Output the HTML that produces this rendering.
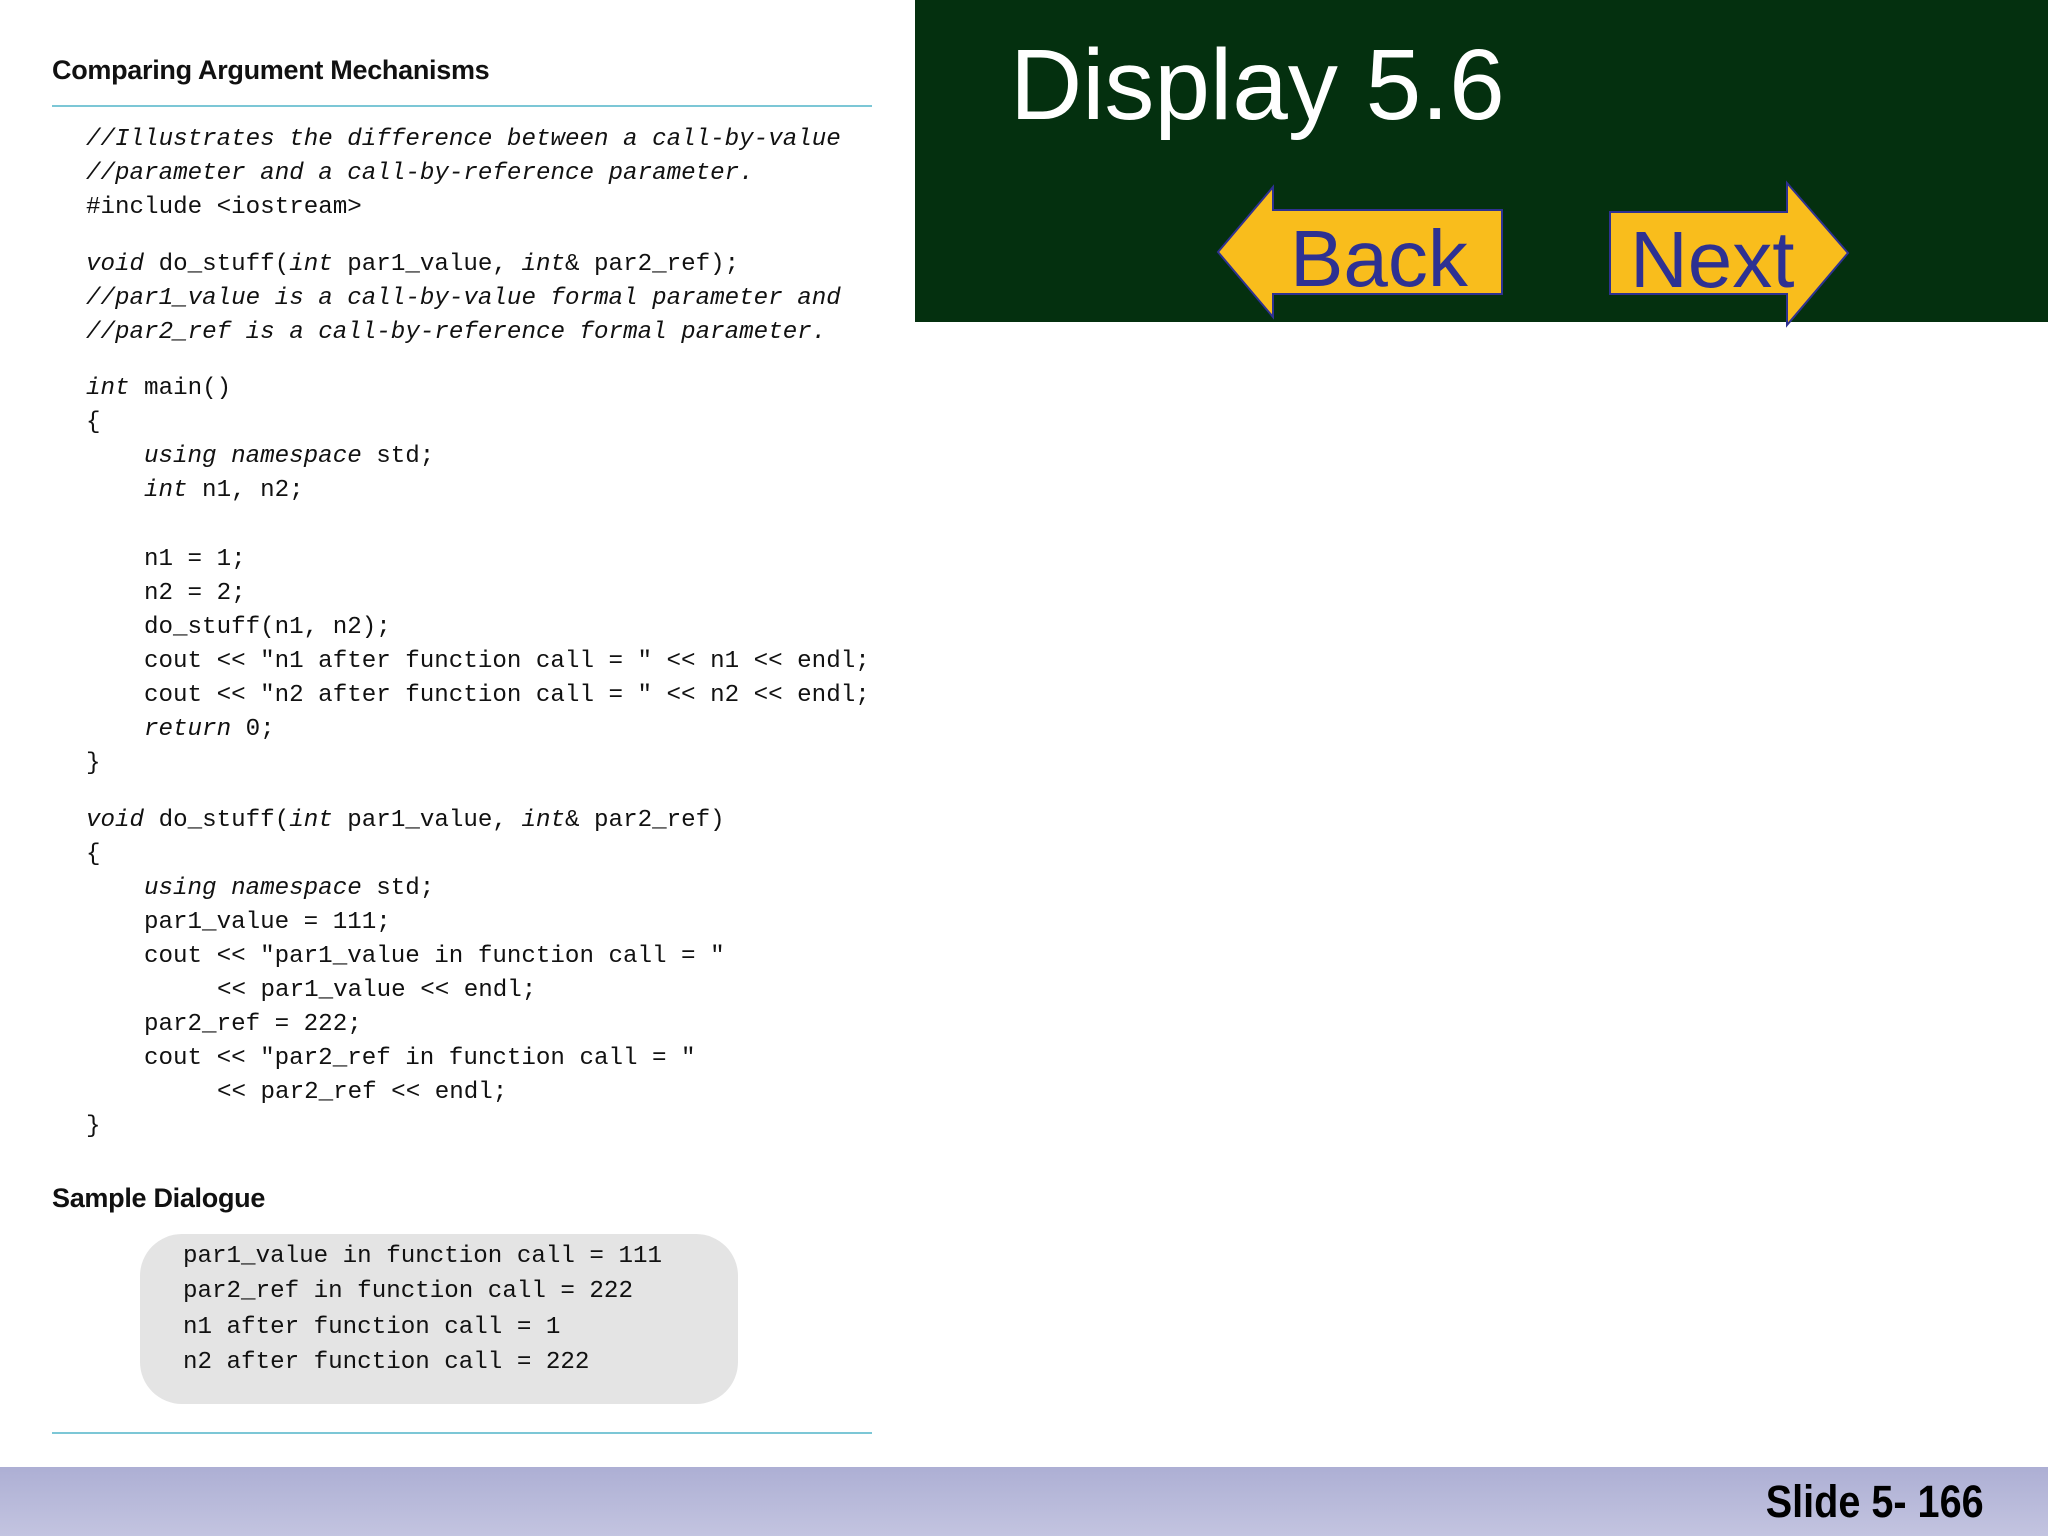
<!DOCTYPE html>
<html><head><meta charset="utf-8"><style>
body{margin:0;width:2048px;height:1536px;position:relative;background:#fff;overflow:hidden;font-family:"Liberation Sans",sans-serif}
.a{position:absolute;white-space:pre}
.c{font-family:"Liberation Mono",monospace;font-size:24.2px;line-height:34px;color:#111;position:absolute;white-space:pre}
i{font-style:italic}
.h{font-weight:bold;font-size:27px;color:#111;letter-spacing:-0.3px}
</style></head><body>
<div class="a h" style="left:52px;top:55px">Comparing Argument Mechanisms</div>
<div style="position:absolute;left:52px;top:105px;width:820px;height:2px;background:#7cc7d6"></div>

<div class="c" style="left:86px;top:123px"><i>//Illustrates the difference between a call-by-value</i></div>
<div class="c" style="left:86px;top:157px"><i>//parameter and a call-by-reference parameter.</i></div>
<div class="c" style="left:86px;top:191px">#include &lt;iostream&gt;</div>
<div class="c" style="left:86px;top:248px"><i>void</i> do_stuff(<i>int</i> par1_value, <i>int</i>&amp; par2_ref);</div>
<div class="c" style="left:86px;top:282px"><i>//par1_value is a call-by-value formal parameter and</i></div>
<div class="c" style="left:86px;top:316px"><i>//par2_ref is a call-by-reference formal parameter.</i></div>
<div class="c" style="left:86px;top:372px"><i>int</i> main()</div>
<div class="c" style="left:86px;top:406px">{</div>
<div class="c" style="left:144px;top:440px"><i>using namespace</i> std;</div>
<div class="c" style="left:144px;top:474px"><i>int</i> n1, n2;</div>
<div class="c" style="left:144px;top:543px">n1 = 1;</div>
<div class="c" style="left:144px;top:577px">n2 = 2;</div>
<div class="c" style="left:144px;top:611px">do_stuff(n1, n2);</div>
<div class="c" style="left:144px;top:645px">cout &lt;&lt; "n1 after function call = " &lt;&lt; n1 &lt;&lt; endl;</div>
<div class="c" style="left:144px;top:679px">cout &lt;&lt; "n2 after function call = " &lt;&lt; n2 &lt;&lt; endl;</div>
<div class="c" style="left:144px;top:713px"><i>return</i> 0;</div>
<div class="c" style="left:86px;top:747px">}</div>
<div class="c" style="left:86px;top:804px"><i>void</i> do_stuff(<i>int</i> par1_value, <i>int</i>&amp; par2_ref)</div>
<div class="c" style="left:86px;top:838px">{</div>
<div class="c" style="left:144px;top:872px"><i>using namespace</i> std;</div>
<div class="c" style="left:144px;top:906px">par1_value = 111;</div>
<div class="c" style="left:144px;top:940px">cout &lt;&lt; "par1_value in function call = "</div>
<div class="c" style="left:217px;top:974px">&lt;&lt; par1_value &lt;&lt; endl;</div>
<div class="c" style="left:144px;top:1008px">par2_ref = 222;</div>
<div class="c" style="left:144px;top:1042px">cout &lt;&lt; "par2_ref in function call = "</div>
<div class="c" style="left:217px;top:1076px">&lt;&lt; par2_ref &lt;&lt; endl;</div>
<div class="c" style="left:86px;top:1110px">}</div>

<div class="a h" style="left:52px;top:1183px">Sample Dialogue</div>
<div style="position:absolute;left:140px;top:1234px;width:598px;height:170px;background:#e4e4e4;border-radius:42px"></div>
<div class="c" style="left:183px;top:1240px">par1_value in function call = 111</div>
<div class="c" style="left:183px;top:1275px">par2_ref in function call = 222</div>
<div class="c" style="left:183px;top:1311px">n1 after function call = 1</div>
<div class="c" style="left:183px;top:1346px">n2 after function call = 222</div>
<div style="position:absolute;left:52px;top:1432px;width:820px;height:2px;background:#7cc7d6"></div>

<div style="position:absolute;left:0;top:1467px;width:2048px;height:69px;background:linear-gradient(#adafd4,#c3c4e0)"></div>
<div class="a" style="right:64px;top:1476px;font-weight:bold;font-size:45px;color:#000;transform:scaleX(0.88);transform-origin:right">Slide 5- 166</div>

<div style="position:absolute;left:915px;top:0;width:1133px;height:322px;background:#04300f"></div>
<div class="a" style="left:1010px;top:28px;font-size:100px;color:#fff">Display 5.6</div>
<svg style="position:absolute;left:0;top:0" width="2048" height="340">
<polygon points="1218,252 1273,187 1273,210 1502,210 1502,294 1273,294 1273,317" fill="#f9bd1c" stroke="#2e3192" stroke-width="2"/>
<polygon points="1610,212 1787,212 1787,183 1848,253 1787,325 1787,294 1610,294" fill="#f9bd1c" stroke="#2e3192" stroke-width="2"/>
<text x="1290" y="286" font-family="Liberation Sans" font-size="80" fill="#2e3192">Back</text>
<text x="1630" y="287" font-family="Liberation Sans" font-size="80" fill="#2e3192">Next</text>
</svg>
</body></html>
